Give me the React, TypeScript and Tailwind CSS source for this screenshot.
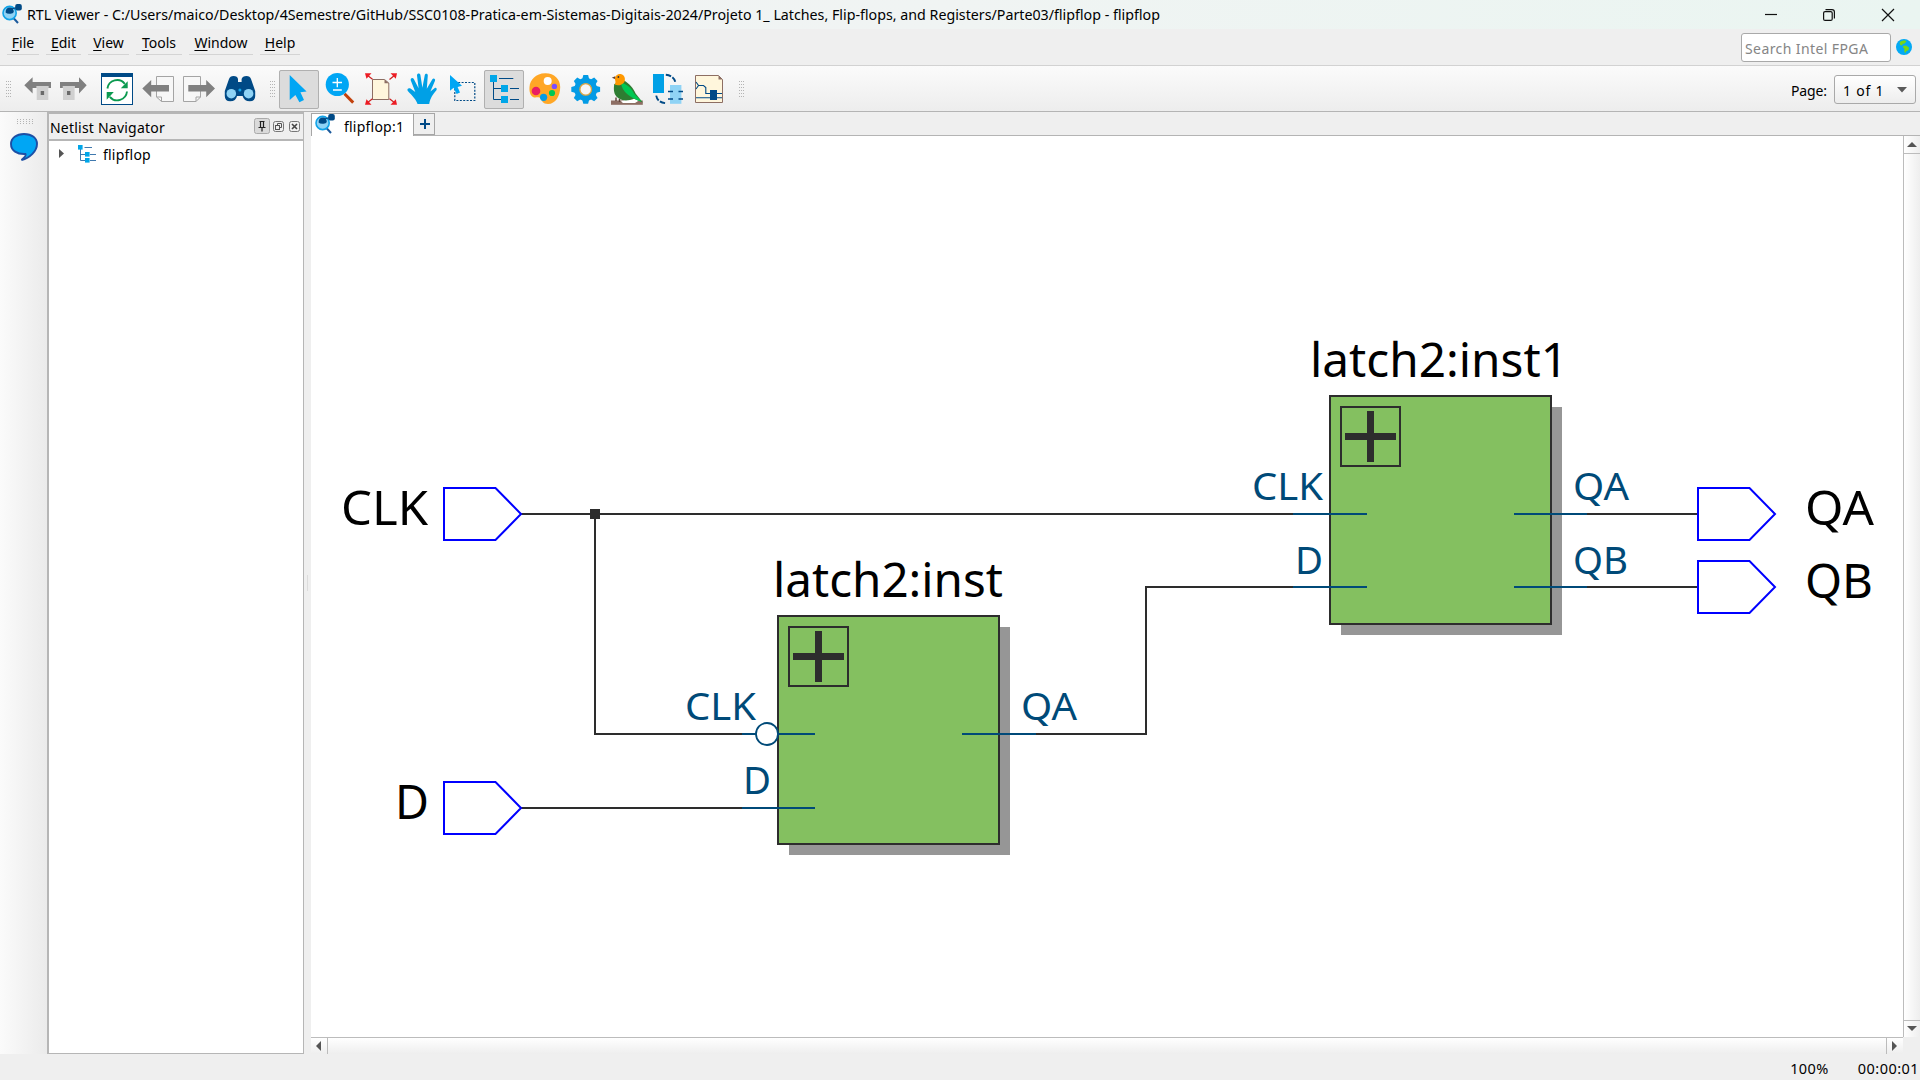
import React from "react";

const UI = "font-['Noto_Sans',sans-serif]";

function Ico({ w = 40, className = "", children }: { w?: number; className?: string; children: React.ReactNode }) {
  return (
    <svg width={w} height={40} viewBox={`0 0 ${w} 40`} className={`block shrink-0 ${className}`}>
      {children}
    </svg>
  );
}

function Grip({ className = "" }: { className?: string }) {
  return (
    <svg width={5} height={17} viewBox="0 0 5 17" className={`mt-[11px] block shrink-0 ${className}`}>
      {[0, 2, 4].map((x) =>
        [0, 3, 6, 9, 12, 15].map((y) => <rect key={`${x}-${y}`} x={x} y={y} width={1} height={1} fill="#b4b4b4" />)
      )}
    </svg>
  );
}

function ViewerLogo({ className = "" }: { className?: string }) {
  return (
    <svg width={20} height={20} viewBox="0 0 20 20" className={`block shrink-0 ${className}`}>
      <path d="M10.5 13 L16 19" stroke="#1b5a9c" strokeWidth={2} />
      <circle cx={7.6} cy={9} r={6.6} fill="#8fd3f5" stroke="#10a3e8" strokeWidth={1.6} />
      <path d="M3.6 8.6 Q3.6 3.6 8 3.6 Q11.6 3.8 11.8 8 Q11 10 8 9.8 Q5 10 3.6 8.6 Z" fill="#004a86" />
      <path d="M9 5 L16 3.4" stroke="#004a86" strokeWidth={1.2} />
      <rect x={13.2} y={0} width={6.6} height={6.6} rx={2} fill="#004a86" />
    </svg>
  );
}

const pointerPath = "M10.7 5 V30 L16.4 25 L20.4 32.2 L25 30 L21.4 22.2 L27.6 21.6 Z";

function FullToolbar() {
  return (
    <div className="flex h-[47px] items-start border-t border-[#d2d2d2] border-b border-b-[#b4b4b4] bg-gradient-to-b from-[#fbfbfb] to-[#ededed] pt-1">
      <Grip className="ml-1.5" />
      <Ico w={36} className="ml-[7px]">
        <rect x={18.7} y={16} width={11.6} height={14} fill="#d0d0d0" />
        <path d="M6.3 15.3 L14.6 7.3 V12 H33 V18 H30.5 V16 H18.5 V18 H14.6 V23.6 Z" fill="#808080" />
        <rect x={22.7} y={21} width={3.4} height={4} fill="#6a6a6a" />
      </Ico>
      <Ico>
        <rect x={9} y={16} width={11.6} height={14} fill="#d0d0d0" />
        <path d="M32.7 15.3 L25 7.3 V12 H6 V18 H8.8 V16 H20.8 V18 H25 V23.6 Z" fill="#808080" />
        <rect x={13} y={21} width={3.4} height={4} fill="#6a6a6a" />
      </Ico>
      <Ico className="ml-[3px]">
        <rect x={4.5} y={3.5} width={31} height={31} fill="#fff" stroke="#004a86" />
        <rect x={4} y={3} width={32} height={4} fill="#004a86" />
        <path d="M10.4 18.5 A9.8 9.8 0 0 1 27.8 13.8" fill="none" stroke="#0c9a50" strokeWidth={1.9} />
        <path d="M30 21.5 A9.8 9.8 0 0 1 12.8 26.8" fill="none" stroke="#0c9a50" strokeWidth={1.9} />
        <path d="M30.7 11.2 V18.2 H23.8 Z M9.7 29.8 V22 H16.8 Z" fill="#0c9a50" />
      </Ico>
      <Ico className="ml-px">
        <path d="M18.5 6.5 H35.5 V31.5 H23.5 L18.5 27 Z" fill="#f7f7f7" stroke="#a4a4a4" />
        <path d="M18.5 27 H23.5 V31.5" fill="none" stroke="#a4a4a4" />
        <path d="M4.3 18.5 L13.2 10 V15 H31 V21.5 H13.2 V27.3 Z" fill="#808080" />
      </Ico>
      <Ico className="ml-px">
        <path d="M4.5 6.5 H21.5 V27 L17 31.5 H4.5 Z" fill="#f7f7f7" stroke="#a4a4a4" />
        <path d="M21.5 27 H17 V31.5" fill="none" stroke="#a4a4a4" />
        <path d="M36 18.5 L27.2 10 V15 H9.3 V21.5 H27.2 V27.3 Z" fill="#808080" />
      </Ico>
      <Ico className="ml-px">
        <path d="M9 9 Q10 6 13.5 6 Q17.5 6 18 9 V12 H21.6 V9 Q22.5 6 26.5 6 Q30 6 31 9 L35.2 21 V26 Q35.2 31.3 29.8 31.3 Q24 31.3 22.6 26 H17 Q16 31.3 10.2 31.3 Q4.8 31.3 4.8 26 V21 Z" fill="#004a86" />
        <circle cx={11.3} cy={23.7} r={4.8} fill="#8fd3f5" />
        <circle cx={28.6} cy={23.7} r={4.8} fill="#8fd3f5" />
        <circle cx={19.9} cy={20} r={1.5} fill="#10a3e8" />
      </Ico>
      <Grip className="ml-2.5" />
      <div className="ml-1 h-[39px] w-10 shrink-0 rounded-[2px] bg-[#dcdcdc] outline outline-1 -outline-offset-1 outline-[#b0b0b0]">
        <Ico>
          <path d={pointerPath} fill="#00a6f4" />
        </Ico>
      </div>
      <Ico className="ml-px">
        <path d="M24.5 23.8 L33.2 32.6" stroke="#c2410c" strokeWidth={3} />
        <circle cx={17.3} cy={14.5} r={11.6} fill="#00a6f4" />
        <path d="M12.5 12.5 H22 M17.3 8 V17.2 M13 20 H21.8" stroke="#fff" strokeWidth={1.3} />
      </Ico>
      <Ico className="ml-px">
        <path d="M11.5 9.5 H23.5 L27.8 13 V29.5 H11.5 Z" fill="#fff6dc" stroke="#8d6e63" />
        <path d="M23.5 9.5 V13.2 H27.8 Z" fill="#8d6e63" />
        <path d="M6 5 L11.5 9.3 M34 5 L28.5 9.5 M6 33 L11.5 28.8 M34 33 L28.5 28.8" stroke="#c22" strokeWidth={1.2} />
        <path d="M4 3.2 H10.5 L5.5 8.8 Z M36 3.2 H29.5 L34.8 8.8 Z M4 34.8 H10.5 L5.5 29.2 Z M36 34.8 H29.5 L34.8 29.2 Z" fill="#ed1c24" />
      </Ico>
      <Ico className="ml-px">
        <path d="M15.5 34 C14.5 30 10 25.5 5.8 21 C4.6 19 6.5 17.5 8.5 18.6 L13.3 22 L8.7 10.2 C8.4 8 10.8 7.2 11.8 9 L16.6 18.3 L15 5.4 C15 3 18 2.8 18.4 5 L20.4 17.8 L22.8 5 C23.3 3 26 3.4 25.8 5.6 L24.8 18.7 L30.2 9.4 C31.4 7.6 33.8 8.8 33 10.8 L28.4 21.6 L32.5 18.2 C34 17.2 35.4 18.6 34.4 20.2 C31 24.5 28.3 27.5 27.2 34 Z" fill="#00a0e6" />
      </Ico>
      <Ico className="ml-px">
        <rect x={11.8} y={12.5} width={20} height={18} fill="none" stroke="#004a86" strokeWidth={1.2} strokeDasharray="2 1.4" />
        <path d="M7 5 V20.8 L10.6 17.8 L13.6 24 L17 22.6 L14.6 17 L19 15.8 Z" fill="#00a6f4" />
      </Ico>
      <div className="ml-px h-[39px] w-10 shrink-0 rounded-[2px] bg-[#dcdcdc] outline outline-1 -outline-offset-1 outline-[#b0b0b0]">
        <Ico>
          <path d="M9.5 11 V29.5 H17 M9.5 18.5 H17 M15 8.5 H29.3 M26 18.5 H35 M26 29.5 H35" fill="none" stroke="#004a86" strokeWidth={1} />
          <rect x={6} y={5} width={7} height={7} fill="#00a6e8" />
          <rect x={17} y={15} width={7} height={7} fill="#00a6e8" />
          <rect x={17} y={26} width={7} height={7} fill="#00a6e8" />
        </Ico>
      </div>
      <Ico className="ml-px">
        <path d="M20 3.3 C29 3 35.2 9 35.2 17 C35.2 26 30.5 34 23 34 C17.5 34 17 30.5 15.5 28.5 C13.5 26 10.5 28.5 8 27 C5 25.3 4.2 21 4.5 17 C5 9.5 11 3.6 20 3.3 Z" fill="#ffa726" />
        <circle cx={22.7} cy={11} r={4} fill="#fff" />
        <circle cx={29.4} cy={16.4} r={2.7} fill="#7c4dff" />
        <circle cx={27} cy={23} r={3.1} fill="#00c853" />
        <circle cx={18.6} cy={27.3} r={3.6} fill="#039be5" />
        <circle cx={11} cy={21} r={4.3} fill="#e91e63" />
      </Ico>
      <Ico className="ml-px">
        <g fill="#039be5" transform="translate(19.7 19.4)">
          <circle r={11.4} />
          {[0, 45, 90, 135, 180, 225, 270, 315].map((a) => (
            <path key={a} d="M-3.8 -9 L-2.4 -14.4 H2.4 L3.8 -9 Z" transform={`rotate(${a})`} />
          ))}
          <circle r={5.8} fill="#f6f6f6" stroke="#d9a441" strokeWidth={1.3} />
        </g>
      </Ico>
      <Ico className="ml-px">
        <rect x={4} y={30.5} width={31.8} height={4.3} fill="#8d6e63" />
        <path d="M14 31.5 L24.5 27 L33 29.8 L28 33 H16 Z" fill="#fff" />
        <path d="M7.3 14 L16.8 10.5 C22 13 27 19 28.6 23.4 L35.8 32.6 L27 28.8 C21 31 14 31.5 9.4 26.5 C6.4 23 6.6 18 7.3 14 Z" fill="#2e7d32" />
        <path d="M14.2 12.4 C20 14 25 18.5 27 23.4 L34.6 31.6 C25 28.5 14 22 14.2 12.4 Z" fill="#00c853" />
        <path d="M7.8 14.6 C9.5 11.5 7.4 10 8 7.6 C9 4.4 12 3.4 14.4 4.2 C18 5.4 18.5 9 17.4 12 C15 15.5 10.5 16 7.8 14.6 Z" fill="#ff9800" />
        <path d="M8.2 6.2 L4.8 7.8 L8 9 Z" fill="#5d4037" />
        <circle cx={11.4} cy={7} r={0.9} fill="#333" />
        <path d="M9 27.5 V31 M12.5 29 V32" stroke="#5d4037" strokeWidth={1.4} />
      </Ico>
      <Ico className="ml-px">
        <rect x={5} y={4} width={11} height={19} fill="#00a0e6" />
        <rect x={22} y={15} width={11.4} height={18.8} fill="#8fd3f5" />
        <path d="M20 21.5 H25 M20 29 H25 M30.5 21.5 H35 M30.5 29 H35" stroke="#004a86" strokeWidth={1.4} />
        <path d="M17.8 4.8 C23 5.3 26.4 8 27.4 12.4" fill="none" stroke="#004a86" strokeWidth={1.9} strokeDasharray="5.5 1.6" />
        <path d="M8.2 25.6 C9 30 12 32.6 17.6 33.2" fill="none" stroke="#004a86" strokeWidth={1.9} strokeDasharray="5.5 1.6" />
      </Ico>
      <Ico className="ml-px">
        <path d="M6.5 5.5 H29.5 L33.5 9.5 V32.5 H6.5 Z" fill="#fff6dc" stroke="#8d6e63" />
        <path d="M29.5 5.5 V9.5 H33.5 Z" fill="#8d6e63" />
        <path d="M7 12 L9.5 15.5 L7 19 M9.5 15.5 H14.5 L16.8 17.5 V23.5 H33 M7 27.8 H33" fill="none" stroke="#004a86" strokeWidth={1.1} />
        <rect x={21} y={20} width={7} height={10} fill="#004a86" />
      </Ico>
      <Grip className="ml-2.5" />
      <div className="ml-auto mr-1 mt-[5px] flex items-center text-[14px] text-black">
        <span className="mr-[7px] mt-0.5 tracking-[-0.1px]">Page:</span>
        <div className="flex h-[29px] w-[82px] items-center justify-between rounded-[3px] border border-[#a9a9a9] bg-gradient-to-b from-white to-[#ededed] pl-2 pr-2">
          <span className="mt-0.5 whitespace-nowrap tracking-[0.8px]">1 of 1</span>
          <svg width={10} height={6} viewBox="0 0 10 6">
            <path d="M0 0 H10 L5 5.5 Z" fill="#5a5a5a" />
          </svg>
        </div>
      </div>
    </div>
  );
}

const menus = [
  { label: "File", w: "w-8" },
  { label: "Edit", w: "w-[35px]" },
  { label: "View", w: "w-[41px]" },
  { label: "Tools", w: "w-[46px]" },
  { label: "Window", w: "w-16" },
  { label: "Help", w: "w-10" },
];

function LatchBlock({ x, y }: { x: number; y: number }) {
  return (
    <g transform={`translate(${x} ${y})`}>
      <rect x={12} y={12} width={221} height={228} fill="#969696" />
      <rect x={1} y={1} width={221} height={228} fill="#84c060" stroke="#2d2d2d" strokeWidth={2} />
      <rect x={12} y={12} width={59} height={59} fill="none" stroke="#2d2d2d" strokeWidth={2} />
      <rect x={16} y={38} width={51} height={7} fill="#2d2d2d" />
      <rect x={38} y={16} width={7} height={51} fill="#2d2d2d" />
    </g>
  );
}

function Port({ x, y }: { x: number; y: number }) {
  return (
    <path d={`M${x} ${y - 26} H${x + 51.5} L${x + 77} ${y} L${x + 51.5} ${y + 26} H${x} Z`} fill="none" stroke="#0000ff" strokeWidth={2} />
  );
}

function Label({ x, y, len, size, fill, children }: { x: number; y: number; len: number; size: number; fill: string; children: string }) {
  return (
    <text x={x} y={y} fontSize={size} fill={fill} textLength={len} lengthAdjust="spacingAndGlyphs">
      {children}
    </text>
  );
}

function Schematic() {
  return (
    <svg width={1592} height={901} viewBox="311 136 1592 901" className={`block ${UI}`}>
      <LatchBlock x={777} y={615} />
      <LatchBlock x={1329} y={395} />
      <g fill="none" stroke="#2d2d2d" strokeWidth={2}>
        <path d="M521 514 H1293" />
        <path d="M595 514 V734 H742" />
        <path d="M521 808 H742" />
        <path d="M1036 734 H1146 V587 H1293" />
        <path d="M1587 514 H1697" />
        <path d="M1587 587 H1697" />
      </g>
      <rect x={590} y={509} width={10} height={10} fill="#2d2d2d" />
      <g fill="none" stroke="#004a78" strokeWidth={2}>
        <path d="M742 734 H815 M742 808 H815 M962 734 H1036" />
        <path d="M1293 514 H1367 M1293 587 H1367 M1514 514 H1587 M1514 587 H1587" />
        <circle cx={767} cy={734} r={11} fill="#fff" strokeWidth={1.8} />
      </g>
      <Port x={444} y={514} />
      <Port x={444} y={808} />
      <Port x={1698} y={514} />
      <Port x={1698} y={587} />
      <Label x={341} y={525} len={87} size={48} fill="#000">CLK</Label>
      <Label x={395} y={819} len={34} size={48} fill="#000">D</Label>
      <Label x={1805} y={525} len={69} size={48} fill="#000">QA</Label>
      <Label x={1805} y={598} len={68} size={48} fill="#000">QB</Label>
      <Label x={773} y={596.5} len={230} size={48} fill="#000">latch2:inst</Label>
      <Label x={1310} y={376.5} len={258} size={48} fill="#000">latch2:inst1</Label>
      <g>
        <Label x={685} y={720} len={71} size={39} fill="#004a78">CLK</Label>
        <Label x={743} y={794} len={28} size={39} fill="#004a78">D</Label>
        <Label x={1021} y={720} len={56} size={39} fill="#004a78">QA</Label>
        <Label x={1252} y={500} len={71} size={39} fill="#004a78">CLK</Label>
        <Label x={1295} y={574} len={28} size={39} fill="#004a78">D</Label>
        <Label x={1573} y={500} len={56} size={39} fill="#004a78">QA</Label>
        <Label x={1573} y={574} len={55} size={39} fill="#004a78">QB</Label>
      </g>
    </svg>
  );
}

export default function App() {
  return (
    <div className={`flex h-[1080px] w-[1920px] flex-col overflow-hidden bg-[#efefef] text-black ${UI}`}>
      <div className="flex h-[29px] shrink-0 items-center bg-gradient-to-r from-[#f1f3f3] via-[#f0f4f3] to-[#eaf5f1]">
        <ViewerLogo className="ml-0.5 -mt-0.5" />
        <span className="ml-[5px] mt-px whitespace-nowrap text-[14.24px] leading-none">
          RTL Viewer - C:/Users/maico/Desktop/4Semestre/GitHub/SSC0108-Pratica-em-Sistemas-Digitais-2024/Projeto 1_ Latches, Flip-flops, and Registers/Parte03/flipflop - flipflop
        </span>
        <svg width={136} height={16} viewBox="0 0 136 16" className="ml-auto mr-6" fill="none" stroke="#111" strokeWidth={1.2}>
          <path d="M5 7.5 H17" />
          <rect x={63.6} y={4.6} width={8.6} height={8.8} rx={1.5} />
          <path d="M65.5 2.6 H72 Q74.4 2.6 74.4 5 V11.5" />
          <path d="M122 2 L134 14 M134 2 L122 14" />
        </svg>
      </div>

      <div className="flex h-9 shrink-0 justify-between">
        <div className="flex gap-[7px] pl-[7px] text-[14px]">
          {menus.map((m) => (
            <div key={m.label} className={`flex h-[26px] items-center justify-center border-b border-[#d4d4d4] pt-px ${m.w}`}>
              <span>
                <span className="underline underline-offset-2">{m.label[0]}</span>
                {m.label.slice(1)}
              </span>
            </div>
          ))}
        </div>
        <div className="flex items-start pr-2 pt-1">
          <div className="flex h-[29px] w-[150px] items-center rounded-[3px] border border-[#a9a9a9] bg-white pl-[3px] pt-0.5 text-[14px] tracking-[0.4px] text-[#858585]">
            Search Intel FPGA
          </div>
          <svg width={16} height={16} viewBox="0 0 16 16" className="ml-[5px] mt-1.5">
            <circle cx={8} cy={8} r={8} fill="#03a9f4" />
            <path d="M4.5 2.6 L8 1.2 L10.5 2 L9 4.2 L6.6 5 L6.2 6.6 L4.2 6 L3.6 4 Z M7.2 7 L10 6.6 L13 8.6 L12.6 11 L10 12.6 L9.2 14.6 L8.2 12 L8.4 9.6 L7 8.6 Z" fill="#76d715" />
          </svg>
        </div>
      </div>

      <FullToolbar />

      <div className="flex h-[942px] shrink-0">
        <div className="flex w-[47px] shrink-0 flex-col items-center bg-gradient-to-r from-[#fbfbfb] to-[#ebebeb] pr-0 pt-[7px]">
          <svg width={17} height={5} viewBox="0 0 17 5" className="ml-1">
            {[0, 2, 4].map((y) => [0, 3, 6, 9, 12, 15].map((x) => <rect key={`${x}-${y}`} x={x} y={y} width={1} height={1} fill="#b4b4b4" />))}
          </svg>
          <svg width={30} height={30} viewBox="0 0 30 30" className="mt-2">
            <path d="M15 2 C23 2 28 6 28 12 C28 19 21 26 12.5 28 C15.5 25.5 17.5 23.5 16.5 22 C8 22.5 2 18.5 2 12 C2 6 7.5 2 15 2 Z" fill="#00a6f4" stroke="#1c4fa5" strokeWidth={1.9} />
          </svg>
        </div>

        <div className="flex w-[257px] shrink-0 flex-col border-b border-l-2 border-r border-[#b6b6b6] bg-white">
          <div className="flex h-[29px] shrink-0 items-center border-b-2 border-t-2 border-[#b6b6b6] bg-[#efefef] pl-[1px] pr-0.5 text-[14px] tracking-[0.22px]">
            <span className="mt-0.5">Netlist Navigator</span>
            <svg width={47} height={18} viewBox="0 0 47 18" className="ml-auto mb-0.5" fill="none">
              <rect x={0.5} y={1.5} width={15} height={15} rx={2} fill="#dadada" stroke="#aaa" />
              <path d="M5.5 4.5 H10.5 M6.5 4.5 V10 M9.5 4.5 V10 M4.5 10.5 H11.5 M8 10.5 V14.5" stroke="#222" strokeWidth={1.2} />
              <rect x={19.5} y={4.5} width={10} height={10} rx={2} stroke="#777" />
              <rect x={21.5} y={8.5} width={4} height={4} stroke="#555" />
              <path d="M23.5 8 V6.5 H27.5 V10.5 H26" stroke="#555" />
              <rect x={35.5} y={4.5} width={10} height={10} rx={2} stroke="#777" />
              <path d="M38 7 L43 12 M43 7 L38 12" stroke="#444" strokeWidth={1.6} />
            </svg>
          </div>
          <div className="flex h-[25px] items-center pl-2.5 text-[14px] tracking-[0.22px]">
            <svg width={5} height={9} viewBox="0 0 5 9">
              <path d="M0 0 L5 4.5 L0 9 Z" fill="#555" />
            </svg>
            <svg width={18} height={18} viewBox="0 0 18 18" className="ml-3.5">
              <path d="M2.5 4 V15.5 H7 M2.5 9.5 H7 M6.5 2.5 H14 M12 9.5 H18 M12 15.5 H18" fill="none" stroke="#2a6aa5" strokeWidth={0.9} />
              <rect x={0} y={0} width={4.6} height={4.6} fill="#00a6e8" />
              <rect x={7} y={7} width={4.6} height={4.6} fill="#00a6e8" />
              <rect x={7} y={13} width={4.6} height={4.6} fill="#00a6e8" />
            </svg>
            <span className="ml-[7px] mt-0.5">flipflop</span>
          </div>
        </div>

        <div className="flex w-[7px] shrink-0 items-center justify-center">
          <div className="h-4 w-px bg-[#dcdcdc]" />
        </div>

        <div className="flex min-w-0 flex-1 flex-col">
          <div className="flex h-6 shrink-0 border-b border-[#b4b4b4]">
            <div className="mt-px flex h-6 w-[103px] shrink-0 items-center border border-[#a6a6a6] bg-white text-[14px] tracking-[0.22px]">
              <ViewerLogo className="-mt-[3px] ml-[3px]" />
              <span className="ml-[9px] mt-1 leading-none">flipflop:1</span>
            </div>
            <div className="mt-px flex h-[22px] w-[21px] items-center justify-center border border-l-0 border-[#a6a6a6]">
              <svg width={10} height={10} viewBox="0 0 10 10" className="ml-px">
                <path d="M0 5 H10 M5 0 V10" stroke="#004a86" strokeWidth={2} />
              </svg>
            </div>
          </div>
          <div className="flex h-[901px] shrink-0 bg-white">
            <Schematic />
            <div className="flex w-[17px] shrink-0 flex-col justify-between border-l border-[#bcbcbc] bg-gradient-to-r from-white to-[#eeeeee]">
              <div className="flex h-[18px] items-center justify-center border-b border-[#bcbcbc] pr-px">
                <svg width={10} height={5} viewBox="0 0 10 5"><path d="M0 5 H10 L5 0 Z" fill="#555" /></svg>
              </div>
              <div className="flex h-[17px] items-center justify-center border-t border-[#bcbcbc] pb-px pr-px">
                <svg width={10} height={5} viewBox="0 0 10 5"><path d="M0 0 H10 L5 5 Z" fill="#555" /></svg>
              </div>
            </div>
          </div>
          <div className="mr-[17px] flex h-[17px] shrink-0 justify-between border-t border-[#bcbcbc] bg-gradient-to-b from-white to-[#eeeeee]">
            <div className="flex w-[17px] items-center justify-center border-r border-[#bcbcbc] pr-px">
              <svg width={5} height={10} viewBox="0 0 5 10"><path d="M5 0 V10 L0 5 Z" fill="#555" /></svg>
            </div>
            <div className="flex w-[17px] items-center justify-center border-l border-[#bcbcbc] pr-px">
              <svg width={5} height={10} viewBox="0 0 5 10"><path d="M0 0 V10 L5 5 Z" fill="#555" /></svg>
            </div>
          </div>
        </div>
      </div>

      <div className="flex h-[26px] shrink-0 items-center justify-end gap-[29px] pr-px pt-[3px] text-[14.5px] leading-none tracking-[0.45px]">
        <span>100%</span>
        <span>00:00:01</span>
      </div>
    </div>
  );
}
